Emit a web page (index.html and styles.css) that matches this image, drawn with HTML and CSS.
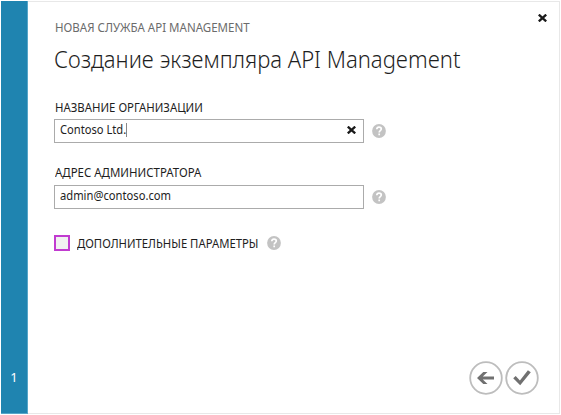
FILE: index.html
```html
<!DOCTYPE html>
<html lang="ru">
<head>
<meta charset="utf-8">
<title>API Management</title>
<link rel="stylesheet" href="styles.css">
</head>
<body>
<div class="dialog">
  <aside class="rail"><span>1</span></aside>
  <main class="content">
    <button class="close" aria-label="Закрыть"><svg width="9" height="8" viewBox="0 0 9 8"><path d="M.8.600l7.400 6.800M8.200.600L.8 7.400"/></svg></button>
    <p class="eyebrow"><span>НОВАЯ СЛУЖБА API MANAGEMENT</span></p>
    <h1 class="title"><span>Создание экземпляра API Management</span></h1>
    <div class="label label-org"><span>НАЗВАНИЕ ОРГАНИЗАЦИИ</span></div>
    <div class="row">
      <div class="field"><span class="value value-org">Contoso Ltd.</span><i class="caret"></i><svg class="clear" width="9" height="8" viewBox="0 0 9 8"><path d="M.8.600l7.400 6.800M8.200.600L.8 7.400"/></svg></div>
      <svg class="help" width="14" height="14" viewBox="0 0 14 14"><circle cx="7" cy="7" r="6.9"/><path d="M4.8 5.3C4.9 3.8 5.8 3.2 7 3.2c1.400 0 2.300.8 2.300 1.900 0 1.500-2.100 1.600-2.100 3.300M7.200 9.500v1.700"/></svg>
    </div>
    <div class="label label-admin"><span>АДРЕС АДМИНИСТРАТОРА</span></div>
    <div class="row">
      <div class="field"><span class="value value-admin">admin@contoso.com</span></div>
      <svg class="help" width="14" height="14" viewBox="0 0 14 14"><circle cx="7" cy="7" r="6.9"/><path d="M4.8 5.3C4.9 3.8 5.8 3.2 7 3.2c1.400 0 2.300.8 2.300 1.900 0 1.500-2.100 1.600-2.100 3.300M7.200 9.500v1.700"/></svg>
    </div>
    <div class="option">
      <span class="box"></span>
      <div class="label label-option"><span>ДОПОЛНИТЕЛЬНЫЕ ПАРАМЕТРЫ</span></div>
      <svg class="help" width="14" height="14" viewBox="0 0 14 14"><circle cx="7" cy="7" r="6.9"/><path d="M4.8 5.3C4.9 3.8 5.8 3.2 7 3.2c1.400 0 2.300.8 2.300 1.900 0 1.500-2.100 1.600-2.100 3.300M7.200 9.500v1.700"/></svg>
    </div>
    <div class="actions">
      <svg width="34" height="34" viewBox="0 0 34 34"><circle cx="17" cy="17" r="15.800"/><path class="glyph" d="M8 17l6.300-6h4.200l-4.700 4.500H25v3H13.800l4.700 4.500h-4.200z"/></svg>
      <svg width="34" height="34" viewBox="0 0 34 34"><circle cx="17" cy="17" r="15.800"/><path class="glyph" d="M8.200 17.200l2.500-2.200 4.200 4.500 8-10.300 2.900 2.100L15.200 24.300z"/></svg>
    </div>
  </main>
</div>
</body>
</html>
```
FILE: styles.css
```css
* { box-sizing: border-box; }
body {
  margin: 0;
  padding: 1px;
  width: 561px;
  height: 415px;
  overflow: hidden;
  background: #fff;
  color: #1e1e1e;
  font-family: "Noto Sans", "Open Sans", sans-serif;
}
.dialog { display: flex; width: 559px; height: 413px; }
.rail {
  display: flex;
  align-items: flex-end;
  justify-content: center;
  width: 27px;
  padding-bottom: 27px;
  background: #1f84b0;
  border: solid #56a6c9;
  border-width: 0 1px 1px 0;
  color: #fff;
  font-size: 13px;
  line-height: 18px;
}
.content {
  position: relative;
  flex: 1;
  display: flex;
  flex-direction: column;
  padding: 18px 20px 18px 26px;
  border: solid #e8e8e8;
  border-width: 1px 1px 1px 0;
}
.close {
  position: absolute;
  top: 12px;
  right: 12px;
  display: flex;
  padding: 0;
  border: 0;
  background: none;
}
.close path, .clear path { fill: none; stroke: #1a1a1a; stroke-width: 2.3; }
p, h1 { margin: 0; font-weight: 400; }
.eyebrow, .title, .label { white-space: nowrap; }
.eyebrow span, .title span, .label span, .value {
  display: inline-block;
  transform-origin: 0 50%;
}
.eyebrow { height: 16px; padding-left: 1px; font-size: 12px; line-height: 16px; color: #6b6b6b; }
.eyebrow span { transform: scaleX(.96); }
.title { height: 32px; margin-top: 7px; font-size: 24px; font-weight: 300; line-height: 32px; }
.title span { transform: scaleX(.918); }
.label { height: 16px; padding-left: 1px; font-size: 12px; line-height: 16px; }
.label-org { margin-top: 25px; }
.label-org span { transform: scaleX(.95); }
.label-admin { margin-top: 22px; }
.label-admin span { transform: scaleX(.955); }
.row { display: flex; align-items: center; gap: 8px; margin-top: 3px; }
.label-admin + .row { margin-top: 4px; }
.field {
  display: flex;
  align-items: center;
  width: 310px;
  height: 24px;
  padding: 0 7px 2px 5px;
  border: 1px solid #ababab;
  font-size: 12px;
  line-height: 16px;
}
.value-org { margin-right: -5px; transform: scaleX(.93); }
.value-admin { transform: scaleX(.932); }
.caret { width: 1px; height: 14px; background: #888; }
.clear { margin-left: auto; }
.help circle { fill: #c3c3c3; }
.help path { fill: none; stroke: #fff; stroke-width: 1.7; }
.option { display: flex; align-items: center; height: 16px; margin-top: 26px; }
.option .label { height: 16px; line-height: 17px; }
.box { width: 16px; height: 16px; border: 2px solid #c13bd0; background: #f1f1f1; }
.label-option { margin-left: 6px; width: 191px; }
.label-option span { transform: scaleX(.943); }
.actions { display: flex; justify-content: flex-end; gap: 2px; margin-top: auto; }
.actions circle { fill: none; stroke: #bdbdbd; stroke-width: 1.800; }
.glyph { fill: #707070; }
```
